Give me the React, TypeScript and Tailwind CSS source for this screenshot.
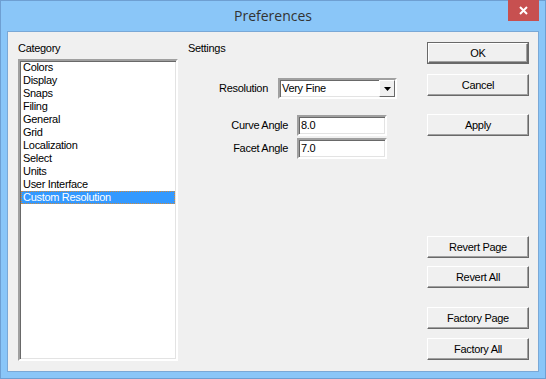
import React from 'react'

const categories = [
  'Colors',
  'Display',
  'Snaps',
  'Filing',
  'General',
  'Grid',
  'Localization',
  'Select',
  'Units',
  'User Interface',
  'Custom Resolution',
]

const sunken =
  'border-2 border-t-[#a0a0a0] border-l-[#a0a0a0] border-r-white border-b-white shadow-[inset_1px_1px_0_#696969,inset_-1px_-1px_0_#e3e3e3]'

const WinButton = ({ label, isDefault = false }: { label: string; isDefault?: boolean }) => {
  return (
    <div className={isDefault ? 'border border-[#696969]' : ''}>
      <div
        className={
          'flex items-center justify-center bg-[#f0f0f0] border border-t-white border-l-white border-r-[#696969] border-b-[#696969] shadow-[inset_-1px_-1px_0_#a0a0a0] text-black ' +
          (isDefault ? 'h-[20px]' : 'h-[22px]')
        }
      >
        {label}
      </div>
    </div>
  )
}

const App = () => {
  return (
    <div
      className="w-[546px] h-[379px] bg-[#8ac6f8] border border-[#6e9fd2] flex flex-col text-[11px] leading-[13px] tracking-[-0.3px] text-black"
      style={{ fontFamily: '"Liberation Sans", Arial, sans-serif' }}
    >
      {/* title bar */}
      <div className="relative h-[30px] flex items-center justify-center">
        <span className="text-[14px] tracking-normal text-[#333] pb-[1px]" style={{ fontFamily: '"Open Sans", "Noto Sans", sans-serif' }}>
          Preferences
        </span>
        <div className="absolute right-[6px] top-[-1px] w-[31px] h-[21px] bg-[#c75050] flex items-center justify-center">
          <svg width="9" height="9" viewBox="0 0 9 9">
            <path d="M1 1 L8 8 M8 1 L1 8" stroke="white" strokeWidth="2" />
          </svg>
        </div>
      </div>

      {/* client area */}
      <div className="mx-[6px] h-[341px] bg-[#f0f0f0] border border-[#7aa8d6] flex">
        {/* category */}
        <div className="pl-[10px] pt-[10px] w-[170px] flex flex-col">
          <div className="h-[13px] mb-[4px]">Category</div>
          <div className={'w-[160px] h-[302px] bg-white ' + sunken}>
            <div className="px-[1px] flex flex-col">
              {categories.map((c) =>
                c === 'Custom Resolution' ? (
                  <div key={c} className="h-[13px] pl-[1px] bg-[#3399ff] text-white border border-dotted border-[#d08a3c] leading-[11px]">
                    {c}
                  </div>
                ) : (
                  <div key={c} className="h-[13px] pl-[2px]">
                    {c}
                  </div>
                ),
              )}
            </div>
          </div>
        </div>

        {/* settings */}
        <div className="pl-[10px] pt-[10px] w-[249px] flex flex-col">
          <div className="h-[13px]">Settings</div>
          <div className="mt-[23px] flex items-center">
            <div className="w-[80px] text-right">Resolution</div>
            <div className={'ml-[10px] w-[119px] h-[21px] bg-white flex items-center ' + sunken}>
              <span className="flex-1 pl-[2px]">Very Fine</span>
              <div className="w-[16px] h-[17px] bg-[#f0f0f0] border border-t-white border-l-white border-r-[#696969] border-b-[#696969] flex items-center justify-center">
                <svg width="7" height="4" viewBox="0 0 7 4">
                  <path d="M0 0 H7 L3.5 4 Z" fill="black" />
                </svg>
              </div>
            </div>
          </div>
          <div className="mt-[16px] flex items-center">
            <div className="w-[100px] text-right">Curve Angle</div>
            <div className={'ml-[9px] w-[90px] h-[21px] bg-white flex items-center pl-[2px] ' + sunken}>8.0</div>
          </div>
          <div className="mt-[2px] flex items-center">
            <div className="w-[100px] text-right">Facet Angle</div>
            <div className={'ml-[9px] w-[90px] h-[21px] bg-white flex items-center pl-[2px] ' + sunken}>7.0</div>
          </div>
        </div>

        {/* buttons */}
        <div className="pt-[10px] w-[102px] flex flex-col">
          <WinButton label="OK" isDefault />
          <div className="mt-[10px]">
            <WinButton label="Cancel" />
          </div>
          <div className="mt-[18px]">
            <WinButton label="Apply" />
          </div>
          <div className="mt-[100px]">
            <WinButton label="Revert Page" />
          </div>
          <div className="mt-[8px]">
            <WinButton label="Revert All" />
          </div>
          <div className="mt-[19px]">
            <WinButton label="Factory Page" />
          </div>
          <div className="mt-[9px]">
            <WinButton label="Factory All" />
          </div>
        </div>
      </div>
    </div>
  )
}

export default App
